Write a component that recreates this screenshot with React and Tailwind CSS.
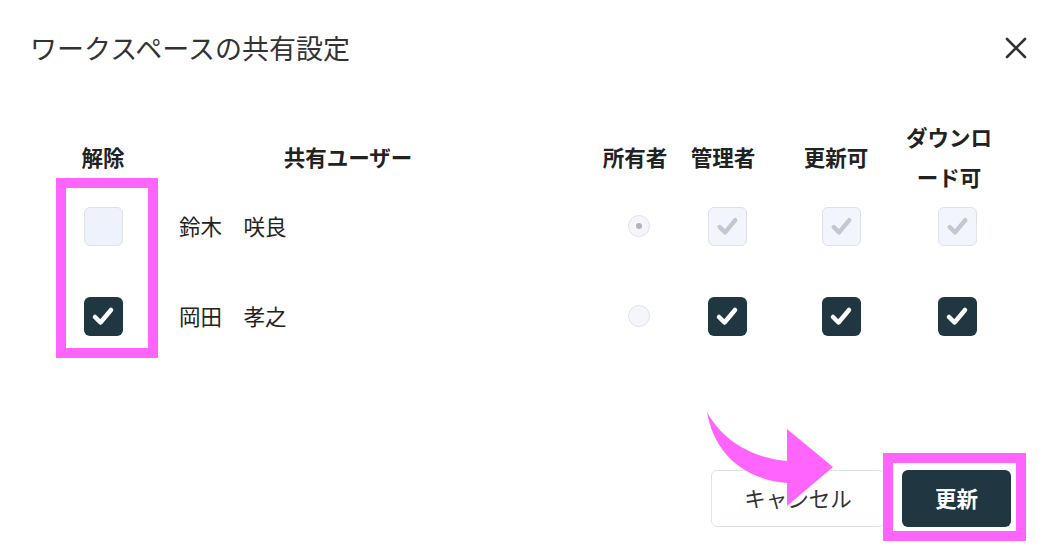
import { useState } from 'react';

const FONT = { fontFamily: '"Noto Sans CJK JP", "Noto Sans", sans-serif' };

const users = [
  { id: 1, name: '鈴木　咲良', owner: true, remove: false },
  { id: 2, name: '岡田　孝之', owner: false, remove: true },
];

const Check = ({ color }) => (
  <svg width="38" height="38" viewBox="0 0 38 38" className="block">
    <path d="M11 20 L16.5 25.5 L27 13" fill="none" stroke={color} strokeWidth="4.5" strokeLinecap="round" strokeLinejoin="round" />
  </svg>
);

const Box = ({ checked, disabled }) => {
  if (disabled) {
    return (
      <div className="h-[39px] w-[39px] rounded-[6px] border-[1.5px] border-[#dde1ea] bg-[#f3f5fc] flex items-center justify-center">
        <Check color="#c3c7cf" />
      </div>
    );
  }
  if (checked) {
    return (
      <div className="h-[39px] w-[39px] rounded-[6px] bg-[#203641] flex items-center justify-center">
        <Check color="#ffffff" />
      </div>
    );
  }
  return <div className="h-[39px] w-[39px] rounded-[6px] border-[1.5px] border-[#dde2ec] bg-[#eef2fb]" />;
};

const Radio = ({ checked }) => (
  <div className="h-[22px] w-[22px] rounded-full border-[1.5px] border-[#dfe3eb] bg-[#f4f6fb] flex items-center justify-center">
    {checked && <span className="h-[6px] w-[6px] rounded-full bg-[#aeb3bc]" />}
  </div>
);

export default function App() {
  const [rows] = useState(users);

  return (
    <div className="relative h-[558px] w-[1064px] overflow-hidden bg-white text-[#222]" style={FONT}>
      <div className="flex h-[96px] items-center justify-between pl-[30px] pr-[36px]">
        <h1 className="text-[27px] font-normal text-[#333]">ワークスペースの共有設定</h1>
        <svg width="24" height="24" viewBox="0 0 24 24">
          <path d="M3 3 L21 21 M21 3 L3 21" stroke="#333" strokeWidth="2.6" strokeLinecap="round" />
        </svg>
      </div>

      <div className="mt-[21px] flex h-[80px] items-center pl-[58px] text-[21.5px] font-bold leading-[40px]">
        <div className="w-[90px] text-center">解除</div>
        <div className="w-[400px] text-center">共有ユーザー</div>
        <div className="ml-[47px] w-[80px] text-center">所有者</div>
        <div className="ml-[8px] w-[80px] text-center">管理者</div>
        <div className="ml-[33px] w-[80px] text-center">更新可</div>
        <div className="ml-[25px] w-[96px] text-center">ダウンロード可</div>
      </div>

      <div className="mt-px flex flex-col gap-[34px] pl-[58px]">
        {rows.map((u) => (
          <div key={u.id} className="flex h-[56px] items-center text-[21.5px]">
            <div className="flex w-[90px] justify-center">
              <Box checked={u.remove} />
            </div>
            <div className="w-[400px] pl-[31px]">{u.name}</div>
            <div className="ml-[51px] flex w-[80px] justify-center">
              <Radio checked={u.owner} />
            </div>
            <div className="ml-[8px] flex w-[80px] justify-center">
              <Box checked={!u.owner} disabled={u.owner} />
            </div>
            <div className="ml-[34px] flex w-[80px] justify-center">
              <Box checked={!u.owner} disabled={u.owner} />
            </div>
            <div className="ml-[36px] flex w-[80px] justify-center">
              <Box checked={!u.owner} disabled={u.owner} />
            </div>
          </div>
        ))}
      </div>

      <div className="mt-[126px] flex justify-end gap-[17px] pr-[53px]">
        <button className="h-[57px] w-[174px] rounded-[6px] border border-[#dfe3ea] bg-white text-[21.5px] text-[#333]">
          キャンセル
        </button>
        <button className="h-[57px] w-[109px] rounded-[6px] bg-[#203641] text-[21.5px] font-bold text-white">
          更新
        </button>
      </div>

      {/* annotation overlays */}
      <div className="pointer-events-none absolute left-[56px] top-[178px] h-[180px] w-[102px] border-[10px] border-[#ff64fc]" />
      <div className="pointer-events-none absolute left-[883px] top-[453px] h-[88px] w-[143px] border-[10px] border-[#ff64fc]" />
      <svg className="pointer-events-none absolute left-0 top-0" width="1064" height="558">
        <path
          d="M707 412 C722 440 752 458 787 461 L787 429 L833 467 L787 506 L787 483 C742 479 714 452 707 412 Z"
          fill="#ff64fc"
        />
      </svg>
    </div>
  );
}
